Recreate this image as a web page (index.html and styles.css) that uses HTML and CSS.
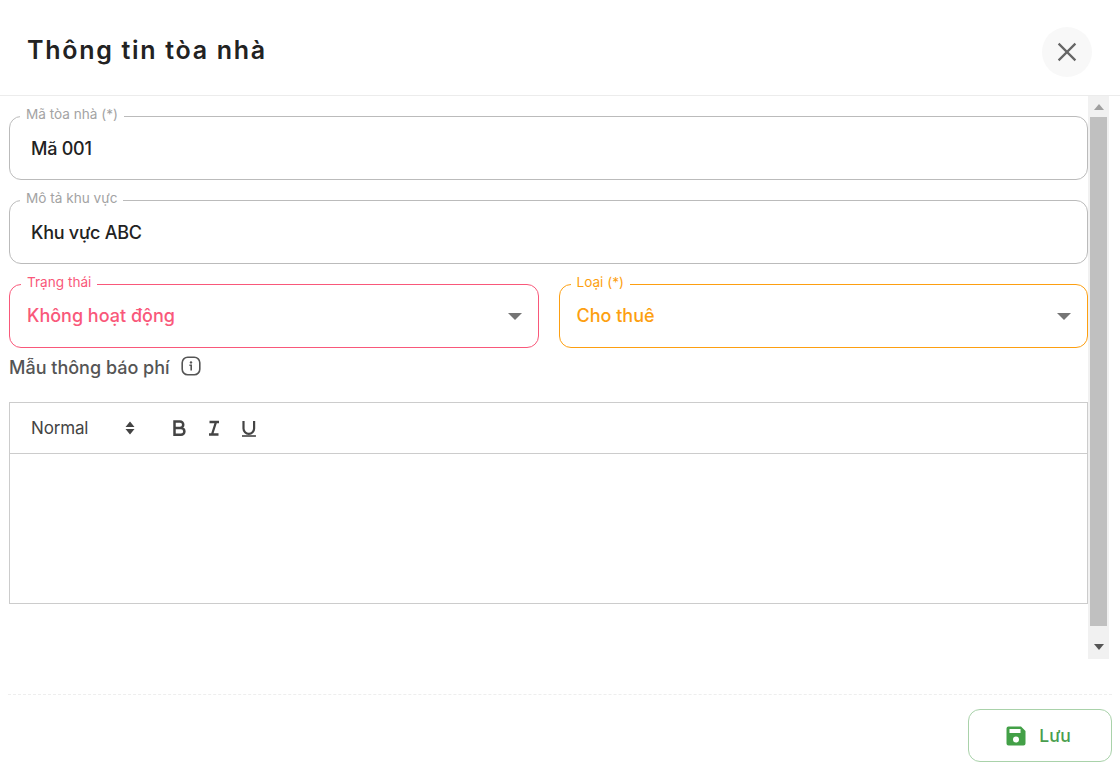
FILE: index.html
```html
<!DOCTYPE html>
<html lang="vi">
<head>
<meta charset="utf-8">
<title>Thông tin tòa nhà</title>
<link rel="stylesheet" href="styles.css">
</head>
<body>
<div class="dialog">
  <header class="head">
    <h1 class="title">Thông tin tòa nhà</h1>
    <button class="close" aria-label="Đóng">
      <svg width="24" height="24" viewBox="0 0 24 24"><path d="M3.6 3.6 20.4 20.4M20.4 3.6 3.6 20.4" stroke="#666" stroke-width="2.2" fill="none"/></svg>
    </button>
  </header>
  <div class="body">
    <main class="content">
      <fieldset class="field">
        <legend class="legend">Mã tòa nhà (*)</legend>
        <div class="value">Mã 001</div>
      </fieldset>
      <fieldset class="field">
        <legend class="legend">Mô tả khu vực</legend>
        <div class="value">Khu vực ABC</div>
      </fieldset>
      <div class="row">
        <fieldset class="field select pink">
          <legend class="legend">Trạng thái</legend>
          <div class="value">Không hoạt động</div>
          <span class="caret"></span>
        </fieldset>
        <fieldset class="field select orange">
          <legend class="legend">Loại (*)</legend>
          <div class="value">Cho thuê</div>
          <span class="caret"></span>
        </fieldset>
      </div>
      <div class="note">
        <span>Mẫu thông báo phí</span>
        <svg width="20" height="20" viewBox="0 0 20 20"><rect x="1.200" y="1.200" width="17.600" height="17.600" rx="5.500" fill="none" stroke="#555" stroke-width="1.600"/><circle cx="10" cy="6.400" r="1.200" fill="#555"/><path d="M8.400 9.200H10.200V14.400" fill="none" stroke="#555" stroke-width="1.600"/></svg>
      </div>
      <div class="editor">
        <div class="toolbar">
          <span class="format">Normal</span>
          <svg class="updown" width="10" height="16" viewBox="0 0 10 16"><path d="M5 1.500 9.500 7H.5ZM.5 9H9.500L5 14.500Z" fill="#444"/></svg>
          <div class="tools">
            <svg width="18" height="18" viewBox="0 0 18 18"><path d="M4.500 2.500H10a3.200 3.200 0 0 1 0 6.500H4.500ZM4.500 9H11a3.400 3.400 0 0 1 0 6.800H4.500Z" fill="none" stroke="#444" stroke-width="2.500"/></svg>
            <svg width="18" height="18" viewBox="0 0 18 18"><path d="M4.500 3H14M4 15.500H13.500M11 3 7 15.500" fill="none" stroke="#444" stroke-width="2.300"/></svg>
            <svg width="18" height="18" viewBox="0 0 18 18"><path d="M3.500 2V9.500a5.300 5.300 0 0 0 10.600 0V2" fill="none" stroke="#444" stroke-width="2.200"/><path d="M2 17H16" stroke="#444" stroke-width="1.600"/></svg>
          </div>
        </div>
        <div class="area"></div>
      </div>
    </main>
    <div class="scrollbar">
      <span class="arrow up"></span>
      <span class="thumb"></span>
      <span class="arrow down"></span>
    </div>
  </div>
  <footer class="foot">
    <button class="save">
      <svg width="22" height="22" viewBox="0 0 22 22"><path d="M3.500 1.500H16L20.500 6V18.500a2 2 0 0 1-2 2H3.500a2 2 0 0 1-2-2V3.500a2 2 0 0 1 2-2Z" fill="#43a047"/><rect x="4.500" y="4" width="11" height="4" fill="#fff"/><circle cx="11" cy="14.500" r="3" fill="#fff"/></svg>
      <span>Lưu</span>
    </button>
  </footer>
</div>
</body>
</html>
```
FILE: styles.css
```css
* { box-sizing: border-box; }
html, body { margin: 0; padding: 0; background: #fff; }
body { font-family: "Inter", "Noto Sans", sans-serif; color: #222; width: 1120px; height: 777px; overflow: hidden; }
.dialog { display: flex; flex-direction: column; height: 777px; }
.head { height: 96px; border-bottom: 1px solid #ececec; display: flex; align-items: center; justify-content: space-between; padding: 14px 28px 5px 27px; }
.title { margin: 0 0 4px; font-size: 25px; font-weight: 600; letter-spacing: 1.7px; color: #222; }
.close { width: 50px; height: 50px; border: 0; border-radius: 50%; background: #f8f8f8; display: flex; align-items: center; justify-content: center; padding: 0; }
.body { display: flex; height: 563px; padding-left: 9px; padding-right: 11px; }
.content { width: 1079px; padding-top: 10px; display: flex; flex-direction: column; }
.field { margin: 0 0 10px; padding: 0; min-width: 0; height: 74px; border: 1px solid #bbb; border-radius: 12px; position: relative; }
.legend { margin-left: 10px; padding: 0 6px; font-size: 13.600px; line-height: 16px; height: 20px; color: #a3a3a3; }
.value { font-size: 18px; font-weight: 500; letter-spacing: -0.25px; line-height: 24px; margin-top: 11px; padding-left: 21px; color: #222; }
.row { display: flex; gap: 20px; }
.select { flex: 1 1 0; margin-bottom: 0; }
.select .legend { margin-left: 11px; }
.select .value { padding-left: 17px; margin-top: 10px; letter-spacing: 0; }
.pink { border-color: #f9587a; }
.pink .legend, .pink .value { color: #f9587a; }
.orange { border-color: #fd9f11; }
.orange .legend, .orange .value { color: #fd9f11; }
.caret { position: absolute; right: 16px; top: 19px; border: 7px solid transparent; border-top-color: #757575; border-bottom: 0; }
.note { display: flex; align-items: center; gap: 11px; height: 38px; padding-top: 1px; font-size: 18px; font-weight: 500; color: #555; margin-bottom: 16px; }
.note svg { margin-top: -4px; }
.editor { border: 1px solid #ccc; height: 202px; }
.toolbar { height: 51px; border-bottom: 1px solid #ccc; display: flex; align-items: center; padding-left: 21px; color: #444; }
.format { width: 94px; font-size: 17px; letter-spacing: -0.15px; }
.tools { display: flex; gap: 17px; margin-left: 35px; }
.scrollbar { width: 21px; background: #f1f1f1; display: flex; flex-direction: column; align-items: center; }
.arrow { display: block; border: 5px solid transparent; }
.up { border-bottom: 6px solid #a0a0a0; border-top: 0; margin: 8px 0 7px; height: 0; }
.thumb { width: 17px; height: 509px; background: #c0c0c0; flex: none; margin-bottom: 18px; }
.down { border-top: 6px solid #555; border-bottom: 0; }
.foot { margin: 35px 8px 0; border-top: 1px dashed #eee; padding-top: 14px; display: flex; justify-content: flex-end; }
.save { width: 144px; height: 53px; border: 1px solid #a9d2aa; border-radius: 12px; background: #fff; display: flex; align-items: center; justify-content: center; gap: 12px; color: #4a9e4e; font: 500 17.500px "Inter", sans-serif; padding: 0 4px 0 0; }
```
